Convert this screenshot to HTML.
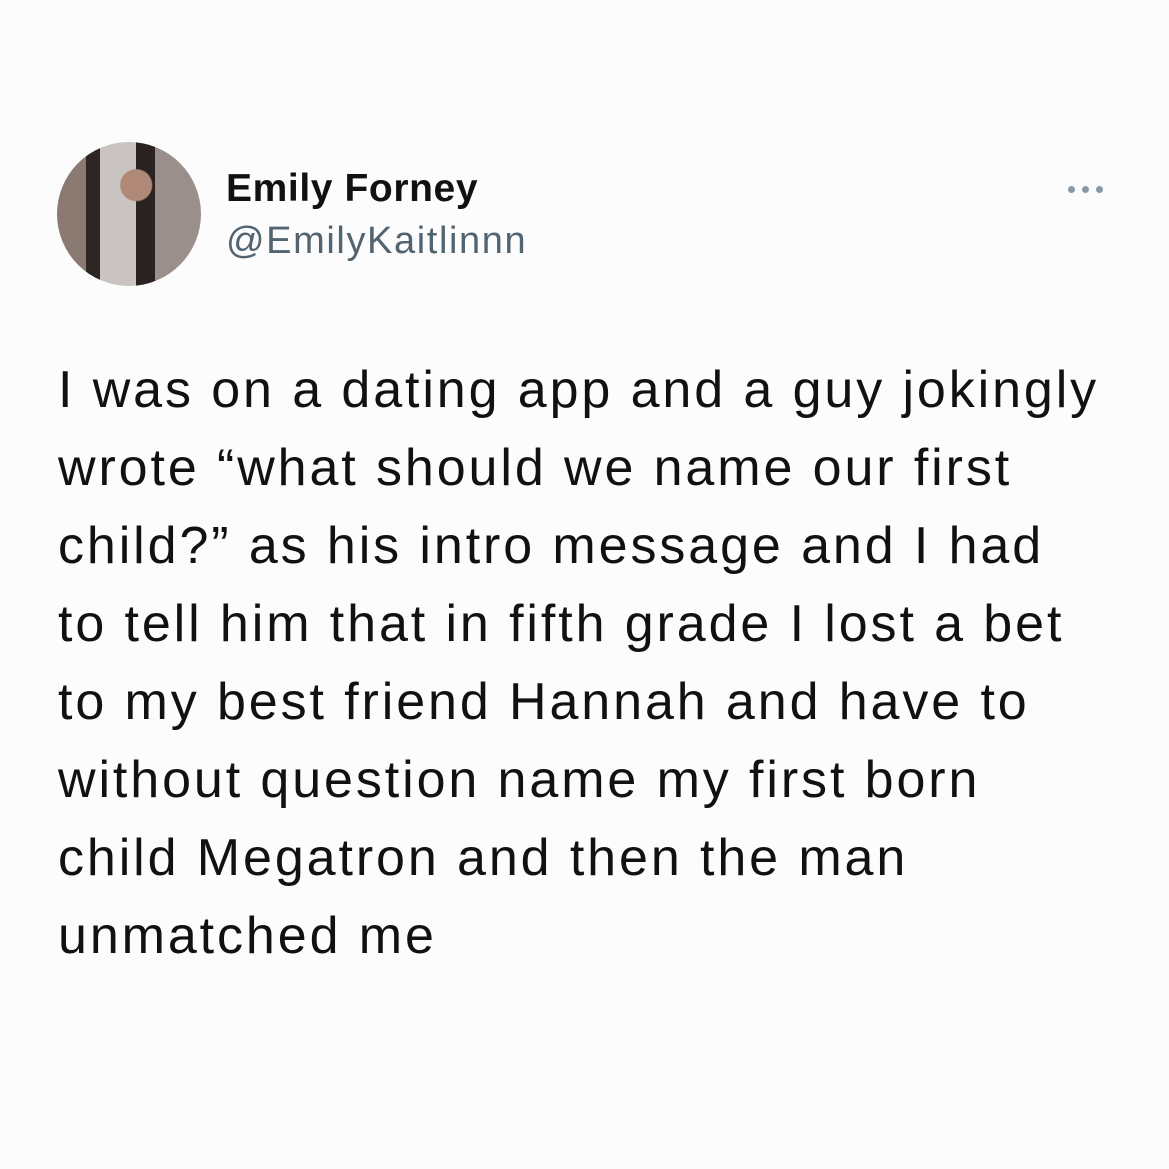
<!DOCTYPE html>
<html><head><style>
body{margin:0;width:1169px;height:1169px;background:#fcfcfd;font-family:"Liberation Sans",sans-serif;position:relative;overflow:hidden}
.av{position:absolute;left:57px;top:142px;width:144px;height:144px;border-radius:50%;background:radial-gradient(circle at 55% 30%,#b08878 0 12%,transparent 13%),linear-gradient(90deg,#8a7a72 0 20%,#2e2622 20% 30%,#c9c4c2 30% 55%,#2a2220 55% 68%,#9a8f8a 68%);overflow:hidden}
.name{position:absolute;left:226px;top:167px;font-weight:bold;font-size:39px;letter-spacing:0.6px;color:#111}
.handle{position:absolute;left:226px;top:220px;font-size:38px;letter-spacing:1.6px;color:#536471}
.dot{position:absolute;top:186px;width:7px;height:7px;border-radius:50%;background:#8899a6}
.txt{position:absolute;left:58px;top:351px;font-size:52px;letter-spacing:2.9px;line-height:78px;color:#111;white-space:pre}
</style></head><body>
<div class="av"></div>
<div class="name">Emily Forney</div>
<div class="handle">@EmilyKaitlinnn</div>
<div class="dot" style="left:1068px"></div><div class="dot" style="left:1082px"></div><div class="dot" style="left:1096px"></div>
<div class="txt">I was on a dating app and a guy jokingly
wrote “what should we name our first
child?” as his intro message and I had
to tell him that in fifth grade I lost a bet
to my best friend Hannah and have to
without question name my first born
child Megatron and then the man
unmatched me</div>
</body></html>
